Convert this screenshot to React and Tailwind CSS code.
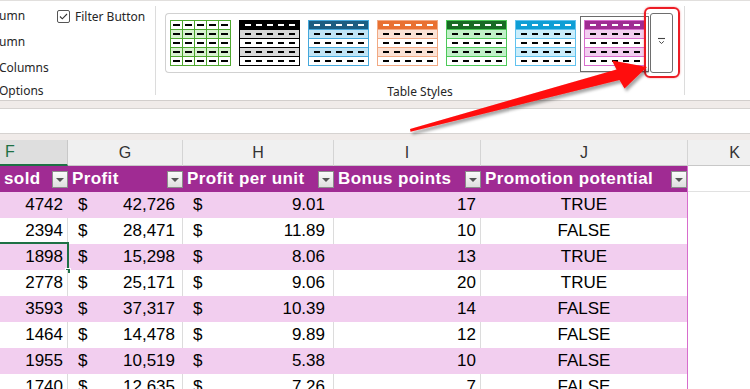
import React from 'react';

const thumbs = [
  { grid: true, outer: 'border-[#4ea72e]', sep: 'border-[#4ea72e]', rows: ['bg-white', 'bg-[#d9f2d0]', 'bg-white', 'bg-[#d9f2d0]', 'bg-white'] },
  { outer: 'border-black', sep: 'border-black', rows: ['bg-black', 'bg-[#d9d9d9]', 'bg-white', 'bg-[#d9d9d9]', 'bg-white'] },
  { outer: 'border-[#44a8dc]', sep: 'border-[#44a8dc]', rows: ['bg-[#1b5e82]', 'bg-[#c1e4f5]', 'bg-white', 'bg-[#c1e4f5]', 'bg-white'] },
  { outer: 'border-[#f1a983]', sep: 'border-[#f1a983]', rows: ['bg-[#e97132]', 'bg-[#fbe2d5]', 'bg-white', 'bg-[#fbe2d5]', 'bg-white'] },
  { outer: 'border-[#4dc959]', sep: 'border-[#4dc959]', rows: ['bg-[#196b24]', 'bg-[#c1f0c8]', 'bg-white', 'bg-[#c1f0c8]', 'bg-white'] },
  { outer: 'border-[#61c2ee]', sep: 'border-[#61c2ee]', rows: ['bg-[#0f9ed5]', 'bg-[#caedfb]', 'bg-white', 'bg-[#caedfb]', 'bg-white'] },
  { selected: true, outer: 'border-[#d86dcd]', sep: 'border-[#d86dcd]', rows: ['bg-[#a02b93]', 'bg-[#f2ceef]', 'bg-white', 'bg-[#f2ceef]', 'bg-white'] },
];

const data = [
  ['4742', '42,726', '9.01', '17', 'TRUE'],
  ['2394', '28,471', '11.89', '10', 'FALSE'],
  ['1898', '15,298', '8.06', '13', 'TRUE'],
  ['2778', '25,171', '9.06', '20', 'TRUE'],
  ['3593', '37,317', '10.39', '14', 'FALSE'],
  ['1464', '14,478', '9.89', '12', 'FALSE'],
  ['1955', '10,519', '5.38', '10', 'FALSE'],
  ['1740', '12,635', '7.26', '7', 'FALSE'],
];

const gridCols = 'grid grid-cols-[68px_115px_151px_147px_207px_94px]';

function Thumb({ t }) {
  return (
    <div className={`w-[61px] h-[46px] border ${t.outer} flex flex-col`}>
      {t.rows.map((bg, i) => (
        <div key={i} className={`flex-1 flex ${bg} ${i > 0 ? `border-t ${t.sep}` : ''} ${t.grid ? '' : 'items-center justify-around px-[2px]'}`}>
          {[0, 1, 2, 3, 4].map((j) =>
            t.grid ? (
              <div key={j} className={`flex-1 flex items-center justify-center ${j > 0 ? `border-l ${t.sep}` : ''}`}>
                <div className="w-[7px] h-[2px] bg-black" />
              </div>
            ) : (
              <div key={j} className={`w-[6px] h-[2px] ${i === 0 ? 'bg-white' : 'bg-black'}`} />
            )
          )}
        </div>
      ))}
    </div>
  );
}

function FilterBtn() {
  return (
    <div className="w-[16px] h-[17px] border border-[#8c8c8c] bg-gradient-to-b from-[#fbfbfb] to-[#dedede] flex items-end justify-center pb-[5px] shrink-0">
      <svg width="8" height="4" viewBox="0 0 8 4"><path d="M0 0h8L4 4z" fill="#555" /></svg>
    </div>
  );
}

function Ribbon() {
  return (
    <div className="h-[101px] border-t border-[#e1dfdd] border-b border-b-[#d2cecc] bg-white flex shadow-[0_1px_3px_rgba(0,0,0,0.12)] font-['Noto_Sans',sans-serif] text-[12px] text-[#262626]">
      <div className="w-[155px] flex flex-col">
        <div className="flex">
          <div className="w-[57px] flex flex-col">
            <div className="h-[26px] pt-[6px] -ml-[1px]">umn</div>
            <div className="h-[26px] pt-[6px] -ml-[1px]">umn</div>
            <div className="h-[26px] pt-[6px] -ml-[1px]">Columns</div>
          </div>
          <div className="flex items-start pt-[9px] gap-[5px]">
            <div className="w-[13px] h-[13px] border border-[#555] rounded-[2px] flex items-center justify-center">
              <svg width="9" height="7" viewBox="0 0 9 7"><path d="M1 3.5l2.3 2.3L8 1" fill="none" stroke="#333" strokeWidth="1.1" /></svg>
            </div>
            <div className="leading-[16px] -mt-[1px]">Filter Button</div>
          </div>
        </div>
        <div className="pt-[3px] -ml-[1px]">Options</div>
      </div>
      <div className="w-px bg-[#dcdcdc] my-[5px]" />
      <div className="w-[528px] flex flex-col items-start pl-[9px] pt-[12px]">
        <div className="flex items-start">
          <div className="w-[484px] h-[60px] border border-[#d1d1d1] border-r-0 rounded-l-[4px] flex gap-[8px] pl-[4px] pt-[6px]">
            {thumbs.map((t, i) =>
              t.selected ? (
                <div key={i} className="-ml-[4px] -mt-[4px] p-[3px] border border-[#6b6b6b]">
                  <Thumb t={t} />
                </div>
              ) : (
                <Thumb key={i} t={t} />
              )
            )}
          </div>
          <div className="relative ml-px">
            <div className="w-[23px] h-[60px] border border-[#6e6e6e] rounded-[3px] bg-white flex items-center justify-center pb-[5px]">
              <svg width="9" height="8" viewBox="0 0 9 8">
                <path d="M1 1.5h7" stroke="#444" strokeWidth="1.1" />
                <path d="M2.2 4.3l2.3 2.2 2.3-2.2" fill="none" stroke="#444" strokeWidth="1" />
              </svg>
            </div>
            <div className="absolute -left-[6px] -top-[6px] -right-[7px] -bottom-[5px] border-2 border-[#ec1c24] rounded-[6px] shadow-[0_0_2px_rgba(236,28,36,0.5)]" />
          </div>
        </div>
        <div className="self-stretch text-center mt-[10px] pr-[9px]">Table Styles</div>
      </div>
      <div className="w-px bg-[#dcdcdc] my-[5px]" />
    </div>
  );
}

function Arrow() {
  return (
    <svg className="absolute left-0 top-0 pointer-events-none" width="750" height="389" viewBox="0 0 750 389">
      <defs>
        <filter id="sh" x="-10%" y="-10%" width="130%" height="140%">
          <feDropShadow dx="2" dy="3" stdDeviation="1.6" floodColor="#000" floodOpacity="0.35" />
        </filter>
      </defs>
      <polygon
        points="410,129 616.5,69.5 612,60.5 647,67 624.5,88.5 619.5,80 410.5,131.8"
        fill="#ff0a0a"
        filter="url(#sh)"
      />
    </svg>
  );
}

export default function App() {
  const letters = ['F', 'G', 'H', 'I', 'J', 'K'];
  const heads = ['sold', 'Profit', 'Profit per unit', 'Bonus points', 'Promotion potential'];
  return (
    <div className="w-[750px] h-[389px] overflow-hidden relative bg-white font-['Liberation_Sans',Arial,sans-serif]">
      <Ribbon />
      <div className="h-[7px] bg-[#f0ebe9]" />
      <div className="h-[26px] bg-white border-y border-[#d6d3d1]" />
      <div className="h-[6px] bg-[#f0ebe9]" />
      <div className={`${gridCols} h-[26px] bg-[#f0f0f0] border-b border-[#c8c8c8] text-[16px] text-[#333]`}>
        {letters.map((l, i) =>
          i === 0 ? (
            <div key={l} className="bg-[#dedede] border-r border-[#c8c8c8] border-b-2 border-b-[#1e7145] flex items-center pl-[5px] text-[#1e7145]">F</div>
          ) : (
            <div key={l} className="border-r border-[#d4d4d4] flex items-center justify-center">{l}</div>
          )
        )}
      </div>
      <div className={`${gridCols} h-[26px]`}>
        {heads.map((h, i) => (
          <div key={h} className={`bg-[#a02b93] flex items-center justify-between pl-[4px] text-white font-bold text-[17px] tracking-[0.4px] ${i === 0 ? 'pl-[3px]' : ''} ${i === 4 ? 'border-r border-[#d86dcd]' : ''}`}>
            <span>{h}</span>
            <FilterBtn />
          </div>
        ))}
        <div className="border-b border-[#e1e1e1]" />
      </div>
      {data.map((r, ri) => {
        const pink = ri % 2 === 0;
        const bg = pink ? 'bg-[#f2ceef]' : 'bg-white';
        const vr = pink ? 'border-r border-transparent' : 'border-r border-[#dcdcdc]';
        return (
          <div key={ri} className={`${gridCols} h-[26px] text-[17px] text-black`}>
            <div className={`relative ${bg} ${vr} border-b border-b-[#d86dcd] flex items-center justify-end pr-[4px]`}>
              {r[0]}
              {ri === 2 && (
                <div className="absolute -top-[2px] -bottom-[2px] -left-[3px] -right-[2px] border-2 border-[#1e7145]">
                  <div className="absolute -right-[4px] -bottom-[4px] w-[6px] h-[6px] bg-[#1e7145] border border-white" />
                </div>
              )}
            </div>
            <div className={`${bg} ${vr} border-b border-b-[#d86dcd] flex items-center justify-between pl-[10px] pr-[7px]`}>
              <span>$</span>
              <span>{r[1]}</span>
            </div>
            <div className={`${bg} ${vr} border-b border-b-[#d86dcd] flex items-center justify-between pl-[10px] pr-[8px]`}>
              <span>$</span>
              <span>{r[2]}</span>
            </div>
            <div className={`${bg} ${vr} border-b border-b-[#d86dcd] flex items-center justify-end pr-[4px]`}>{r[3]}</div>
            <div className={`${bg} border-r border-[#d86dcd] border-b border-b-[#d86dcd] flex items-center justify-center`}>{r[4]}</div>
            <div className="bg-white border-b border-[#e1e1e1]" />
          </div>
        );
      })}
      <Arrow />
    </div>
  );
}
